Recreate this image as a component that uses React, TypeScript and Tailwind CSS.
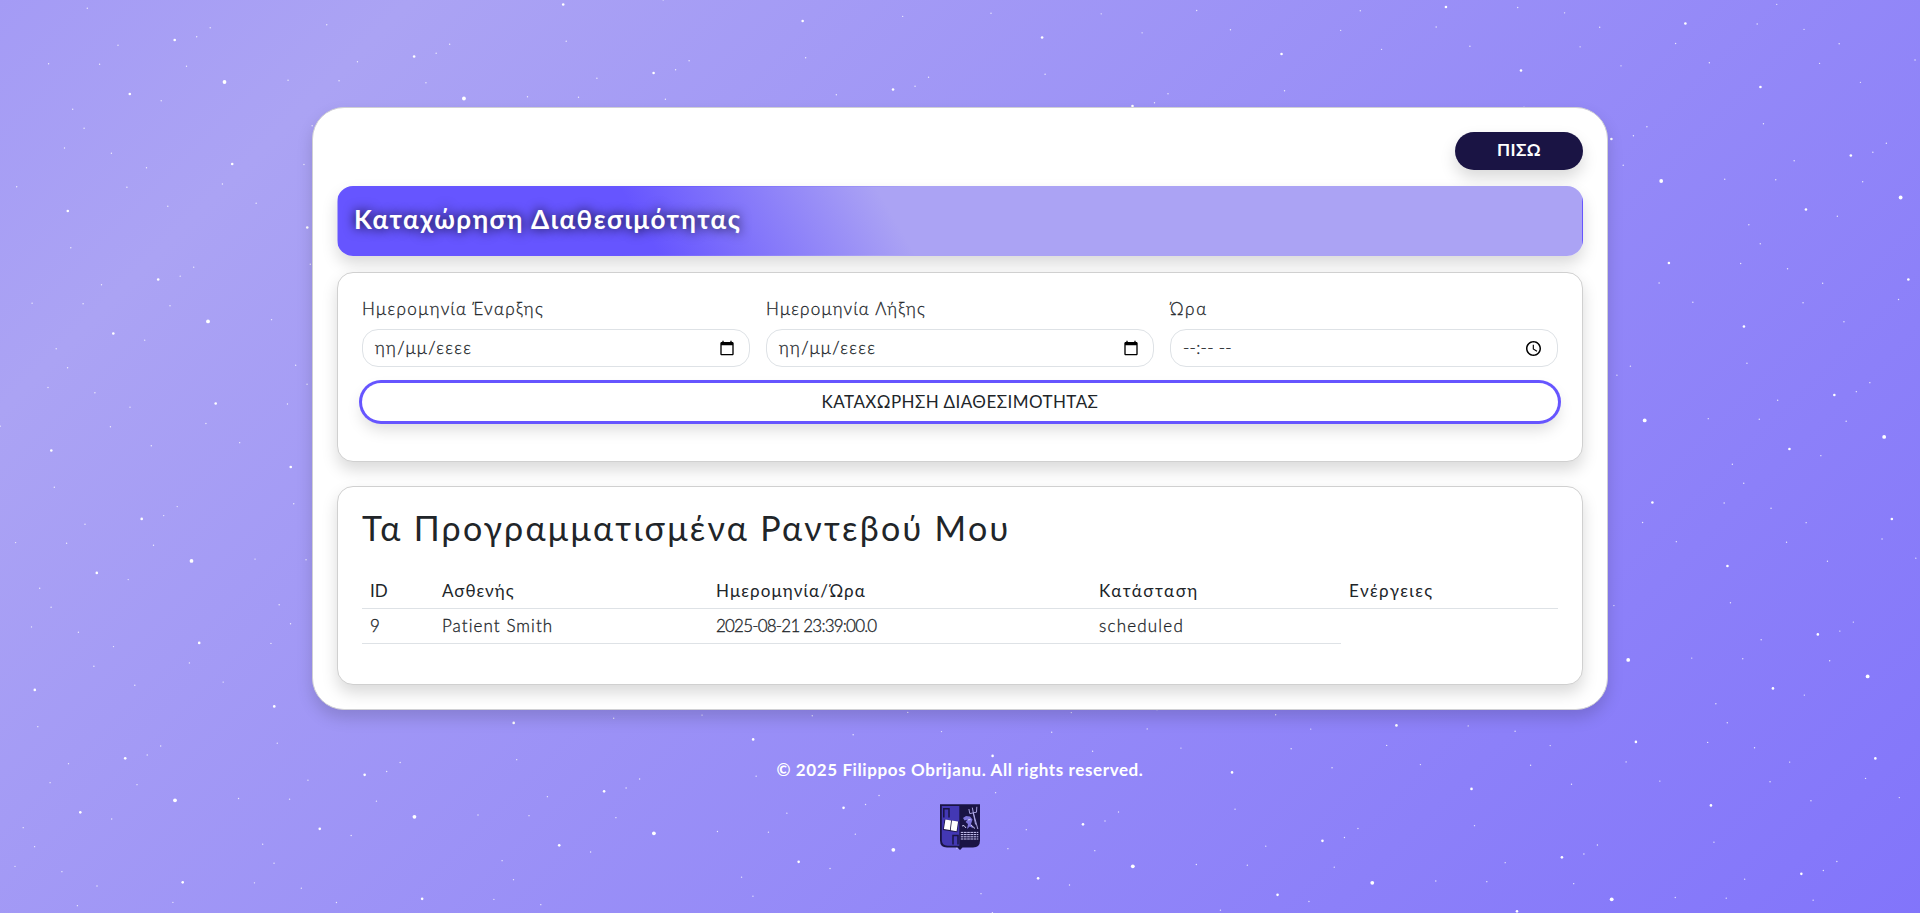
import React from "react";

const STARS: [number, number, number][] = [
  [87.3, 8.3, 0.7], [210.2, 27.7, 0.7], [196.7, 36.7, 0.7], [174.7, 40, 1.3], [118, 45.3, 0.7],
  [48.6, 63.7, 0.7], [99.6, 64.3, 0.7], [186.5, 66.3, 0.7], [224.5, 82, 1.9], [129.8, 94, 1.3],
  [161.2, 100.7, 0.7], [72.7, 109.3, 0.7], [84.1, 128.3, 0.7], [64.5, 148, 0.7], [111.4, 153.3, 0.7],
  [146.5, 167.7, 0.7], [232.2, 164, 1.3], [222.4, 184, 0.7], [16.7, 186.7, 0.7], [126.9, 187.3, 0.7],
  [167.8, 206.3, 0.7], [67.8, 211, 1.3],
];

const STEP_X = 239.45;
const STEP_Y = 16.5;

function StarField() {
  const dots: React.ReactNode[] = [];
  for (let i = -1; i < 9; i++) {
    for (let j = -3; j < 5; j++) {
      STARS.forEach(([x, y, r], k) => {
        const cx = x + i * STEP_X - j * STEP_Y;
        const cy = y + i * STEP_Y + j * STEP_X;
        if (cx < -3 || cx > 1923 || cy < -3 || cy > 916) return;
        dots.push(<circle key={`${i}.${j}.${k}`} cx={cx} cy={cy} r={r} fill="#fff" fillOpacity={r < 1 ? 0.8 : 1} />);
      });
    }
  }
  return (
    <svg className="absolute inset-0" width="1920" height="913" viewBox="0 0 1920 913" aria-hidden="true">
      {dots}
    </svg>
  );
}

function CalendarIcon() {
  return (
    <svg className="mr-3.5" width="16" height="16" viewBox="0 0 24 24" fill="#000">
      <path d="M20 3h-1V1h-2v2H7V1H5v2H4c-1.1 0-2 .9-2 2v16c0 1.1.9 2 2 2h16c1.1 0 2-.9 2-2V5c0-1.1-.9-2-2-2zm0 18H4V8h16v13z" />
    </svg>
  );
}

function ClockIcon() {
  return (
    <svg className="mr-4" width="15" height="15" viewBox="2 2 20 20" fill="#000">
      <path d="M12 2C6.5 2 2 6.5 2 12s4.5 10 10 10 10-4.5 10-10S17.5 2 12 2zm0 18c-4.4 0-8-3.6-8-8s3.6-8 8-8 8 3.6 8 8-3.6 8-8 8zm.5-13H11v6l5.2 3.2.8-1.3-4.5-2.7V7z" />
    </svg>
  );
}

function Crest() {
  return (
    <svg width="40" height="46" viewBox="0 0 40 46">
      <path d="M0 0.3H40V36.5Q40 43.4 33 43.6H22.5L20 46L17.5 43.6H7Q0 43.4 0 36.5Z" fill="#1a1444" />
      <path d="M1.8 2H19.3V41.8H7.5Q1.8 41.6 1.8 36Z" fill="#4338b4" />
      <path d="M3.8 13.5V4.7H9V13.5M13 40.5V31.6H18V40.5" fill="none" stroke="#1a1444" strokeWidth="1.5" />
      <path d="M3 26L4.6 15.4L18.8 17.4L17.2 28.2Z" fill="#1a1444" />
      <path d="M5.4 15.6L11.1 16.5L9.9 26L3.9 25ZM11.9 16.6L18.1 17.5L16.6 27.2L10.7 26.2Z" fill="#fff" />
      <path d="M35.6 20.5L32.3 3.6M28.9 5L29.8 9.6L36.5 8.2L36.8 2.8M33.4 9L37.8 25" fill="none" stroke="#b6b0ee" strokeWidth="0.9" />
      <path d="M23 14L26 12L30 12.6L32.5 15.6L31 20L33.5 24.4L29.8 22.6L27 25L28 20L25.6 18L27.5 15.4L24.6 16.6Z" fill="#7d74da" />
      <path d="M22 22Q24 20 26 24M28 16L30.5 15.4M31 21L35 24.5" fill="none" stroke="#dedaff" strokeWidth="0.9" />
      <path d="M20.8 28.4H38.3M20.8 30.6H38.3M20.8 32.8H38.3M20.8 35H38.3" fill="none" stroke="#cfcaf8" strokeWidth="1" strokeDasharray="2.6 0.6" />
    </svg>
  );
}

function Field({ label, value, labelClass, valueClass, icon }: { label: string; value: string; labelClass: string; valueClass: string; icon: React.ReactNode }) {
  return (
    <div>
      <div className={`mb-2 h-6 text-[17px] leading-6 font-light whitespace-nowrap [-webkit-text-stroke:0.3px_#212529] ${labelClass}`}>{label}</div>
      <div className="flex h-[38px] items-center justify-between rounded-2xl border border-[#dee2e6] bg-white pl-3">
        <span className={`text-[17px] leading-6 font-light whitespace-pre [-webkit-text-stroke:0.3px_#212529] ${valueClass}`}>{value}</span>
        {icon}
      </div>
    </div>
  );
}

const SHADOW = "shadow-[0_8px_16px_rgba(0,0,0,0.15)]";
const CELL = "h-[35px] border-b border-[#dee2e6] px-2 pt-[5px] whitespace-nowrap";
const BODY_CELL = `${CELL} font-light [-webkit-text-stroke:0.3px_#212529]`;

export default function App() {
  return (
    <div className="relative h-[913px] w-full overflow-hidden bg-[linear-gradient(135deg,#6655ff_-2590px,#aba3f4_290px,#6655ff_3170px)] font-[Lato,'Open_Sans',sans-serif] text-[#212529]">
      <StarField />
      <div className="relative flex flex-col items-center pt-[107px]">
        <main className={`flex h-[603px] w-[1296px] flex-col rounded-[32px] border border-[#d0d0d4] bg-white p-6 ${SHADOW}`}>
          <div className="mb-4 flex justify-end">
            <button className={`h-[38px] w-32 rounded-[19px] bg-[#1a1444] pb-0.5 text-[17px] font-bold tracking-[0.4px] text-white ${SHADOW}`}>ΠΙΣΩ</button>
          </div>

          <div className={`mb-4 flex h-[70px] items-center rounded-2xl border border-transparent bg-[linear-gradient(60deg,#6655ff_25%,#aba3f4_45%)] px-4 pb-1 ${SHADOW}`}>
            <h1 className="text-[26px] font-bold tracking-[1.53px] whitespace-nowrap text-white [text-shadow:0_0_12px_#000]">Καταχώρηση Διαθεσιμότητας</h1>
          </div>

          <section className={`mb-6 h-[190px] rounded-2xl border border-[#d0d0d0] bg-white p-6 ${SHADOW}`}>
            <div className="mb-4 grid grid-cols-3 gap-4">
              <Field label="Ημερομηνία Έναρξης" labelClass="tracking-[1.4px]" value="ηη/μμ/εεεε" valueClass="tracking-[1.35px]" icon={<CalendarIcon />} />
              <Field label="Ημερομηνία Λήξης" labelClass="tracking-[1.25px]" value="ηη/μμ/εεεε" valueClass="tracking-[1.35px]" icon={<CalendarIcon />} />
              <Field label="Ώρα" labelClass="tracking-[1.7px]" value="--:-- --" valueClass="tracking-[0.3px]" icon={<ClockIcon />} />
            </div>
            <button className="h-[38px] w-full rounded-[19px] bg-white text-[17px] tracking-[0.45px] shadow-[0_0_0_3px_#6655ff,0_8px_16px_rgba(0,0,0,0.15)]">
              ΚΑΤΑΧΩΡΗΣΗ ΔΙΑΘΕΣΙΜΟΤΗΤΑΣ
            </button>
          </section>

          <section className={`h-[199px] rounded-2xl border border-[#d0d0d0] bg-white px-6 pt-[22px] ${SHADOW}`}>
            <h2 className="mb-[27px] h-[38px] text-[34px] leading-[38px] tracking-[2.3px] whitespace-nowrap">Τα Προγραμματισμένα Ραντεβού Μου</h2>
            <div className="grid grid-cols-[72px_274px_383px_250px_217px] text-[17px] leading-6">
              <div className={CELL}>ID</div>
              <div className={`${CELL} tracking-[0.97px]`}>Ασθενής</div>
              <div className={`${CELL} tracking-[1.12px]`}>Ημερομηνία/Ώρα</div>
              <div className={`${CELL} tracking-[1.5px]`}>Κατάσταση</div>
              <div className={`${CELL} tracking-[1.45px]`}>Ενέργειες</div>
              <div className={BODY_CELL}>9</div>
              <div className={`${BODY_CELL} tracking-[1.07px]`}>Patient Smith</div>
              <div className={`${BODY_CELL} tracking-[-0.8px]`}>2025-08-21 23:39:00.0</div>
              <div className={`${BODY_CELL} tracking-[1.2px]`}>scheduled</div>
            </div>
          </section>
        </main>

        <footer className="flex flex-col items-center pt-12 text-white">
          <p className="mb-[22px] text-[17px] leading-6 font-bold tracking-[0.6px] whitespace-nowrap">© 2025 Filippos Obrijanu. All rights reserved.</p>
          <Crest />
        </footer>
      </div>
    </div>
  );
}
